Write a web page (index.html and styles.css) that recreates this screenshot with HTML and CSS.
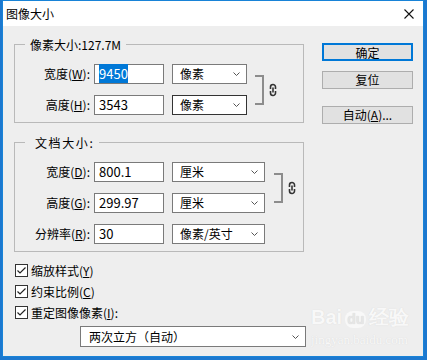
FILE: index.html
```html
<!DOCTYPE html>
<html>
<head>
    <title>图像大小</title>
    <link rel="stylesheet" href="styles.css">
</head>
<body>
    <div class="window">
        <div class="titlebar">
            <span class="title">图像大小</span>
            <svg class="close" width="10" height="10" viewBox="0 0 10 10">
                <path d="M0.5 0.5 L9.5 9.5 M9.5 0.5 L0.5 9.5" stroke="#111" stroke-width="1.1" fill="none"/>
            </svg>
        </div>

        <div class="content">
            <div class="main">
                <!-- Pixel dimensions -->
                <fieldset class="group">
                    <legend>像素大小:127.7M</legend>
                    <div class="rows">
                        <label class="lbl">宽度(<u>W</u>):</label>
                        <div class="field"><span class="sel">9450</span></div>
                        <div class="select">像素
                            <svg width="7" height="4" viewBox="0 0 7 4"><path d="M0.5 0.5 L3.5 3.5 L6.5 0.5" stroke="#555" fill="none"/></svg>
                        </div>
                        <div class="bracket"></div>
                        <svg class="link" width="8" height="14" viewBox="0 0 8 14">
                            <path d="M1.5 6 V4 A2.5 2.5 0 0 1 6.5 4 V6 M1.5 8 V10 A2.5 2.5 0 0 0 6.5 10 V8 M4 4.5 V9.5" stroke="#333" stroke-width="1.6" fill="none"/>
                        </svg>

                        <label class="lbl">高度(<u>H</u>):</label>
                        <div class="field">3543</div>
                        <div class="select dark">像素
                            <svg width="7" height="4" viewBox="0 0 7 4"><path d="M0.5 0.5 L3.5 3.5 L6.5 0.5" stroke="#555" fill="none"/></svg>
                        </div>
                    </div>
                </fieldset>

                <!-- Document size -->
                <fieldset class="group doc">
                    <legend>文档大小:</legend>
                    <div class="rows">
                        <label class="lbl">宽度(<u>D</u>):</label>
                        <div class="field">800.1</div>
                        <div class="select">厘米
                            <svg width="7" height="4" viewBox="0 0 7 4"><path d="M0.5 0.5 L3.5 3.5 L6.5 0.5" stroke="#555" fill="none"/></svg>
                        </div>
                        <div class="bracket"></div>
                        <svg class="link" width="8" height="14" viewBox="0 0 8 14">
                            <path d="M1.5 6 V4 A2.5 2.5 0 0 1 6.5 4 V6 M1.5 8 V10 A2.5 2.5 0 0 0 6.5 10 V8 M4 4.5 V9.5" stroke="#333" stroke-width="1.6" fill="none"/>
                        </svg>

                        <label class="lbl">高度(<u>G</u>):</label>
                        <div class="field">299.97</div>
                        <div class="select">厘米
                            <svg width="7" height="4" viewBox="0 0 7 4"><path d="M0.5 0.5 L3.5 3.5 L6.5 0.5" stroke="#555" fill="none"/></svg>
                        </div>

                        <label class="lbl">分辨率(<u>R</u>):</label>
                        <div class="field">30</div>
                        <div class="select">像素/英寸
                            <svg width="7" height="4" viewBox="0 0 7 4"><path d="M0.5 0.5 L3.5 3.5 L6.5 0.5" stroke="#555" fill="none"/></svg>
                        </div>
                    </div>
                </fieldset>

                <!-- Options -->
                <div class="checks">
                    <div class="check">
                        <svg width="13" height="13" viewBox="0 0 13 13"><rect x="0.5" y="0.5" width="12" height="12" fill="#fff" stroke="#333"/><path d="M2.5 6.5 L5 9 L10.5 3.5" stroke="#222" stroke-width="1.2" fill="none"/></svg>
                        <span>缩放样式(<u>Y</u>)</span>
                    </div>
                    <div class="check">
                        <svg width="13" height="13" viewBox="0 0 13 13"><rect x="0.5" y="0.5" width="12" height="12" fill="#fff" stroke="#333"/><path d="M2.5 6.5 L5 9 L10.5 3.5" stroke="#222" stroke-width="1.2" fill="none"/></svg>
                        <span>约束比例(<u>C</u>)</span>
                    </div>
                    <div class="check">
                        <svg width="13" height="13" viewBox="0 0 13 13"><rect x="0.5" y="0.5" width="12" height="12" fill="#fff" stroke="#333"/><path d="M2.5 6.5 L5 9 L10.5 3.5" stroke="#222" stroke-width="1.2" fill="none"/></svg>
                        <span>重定图像像素(<u>I</u>):</span>
                    </div>
                </div>
                <div class="select resample">两次立方（自动）
                    <svg width="7" height="4" viewBox="0 0 7 4"><path d="M0.5 0.5 L3.5 3.5 L6.5 0.5" stroke="#555" fill="none"/></svg>
                </div>
            </div>

            <div class="buttons">
                <button class="btn default">确定</button>
                <button class="btn">复位</button>
                <button class="btn auto">自动(<u>A</u>)...</button>
            </div>
        </div>

        <div class="watermark">
            <div class="wm-logo">Bai<span class="paw">du</span>经验</div>
            <div class="wm-url">jingyan.baidu.com</div>
        </div>
    </div>
</body>
</html>
```

FILE: styles.css
```css
body { margin: 0; background: #1c78cf; font-family: "Noto Sans CJK SC", "Noto Sans", sans-serif; font-size: 12px; color: #000; }
.window { position: relative; box-sizing: border-box; width: 422px; height: 357px; margin-left: 2px; border: 1px solid #1883d7; background: #eeeeee; overflow: hidden; }
.titlebar { height: 25px; background: #fff; display: flex; align-items: center; justify-content: space-between; padding: 0 9px 0 3px; }
.title { font-size: 12px; line-height: 16px; }

.content { display: flex; gap: 18px; padding: 10px 10px 0 11px; }
.main { width: 290px; }

.group { margin: 0; padding: 11px 0 7px; border: 1px solid #b9b9b9; min-width: 0; }
.group legend { margin-left: 10px; padding: 0 5px; line-height: 17px; font-size: 12px; }
.group.doc { margin-top: 11px; }
.group.doc legend { padding-left: 10px; letter-spacing: 1.6px; }

.rows { display: grid; grid-template-columns: 75px auto auto auto auto; justify-content: start; row-gap: 11px; align-items: center; }
.lbl { text-align: right; line-height: 20px; white-space: nowrap; }
.field { box-sizing: border-box; width: 70px; height: 20px; margin-left: 4px; padding: 0 4px; border: 1px solid #7a7a7a; background: #fff; font-size: 13px; line-height: 18px; }
.sel { background: #0078d7; color: #fff; }
.select { box-sizing: border-box; width: 75px; height: 20px; margin-left: 8px; padding: 0 6px 0 7px; border: 1px solid #7a7a7a; background: #fff; display: flex; align-items: center; justify-content: space-between; line-height: 18px; font-size: 12px; }
.select.dark { border-color: #333; }
.doc .select { width: 93px; }
.bracket { grid-column: 4; grid-row: 1 / 3; box-sizing: border-box; width: 9px; height: 30px; margin-left: 8px; border: 2px solid #8c8c8c; border-left: 0; }
.link { grid-column: 5; grid-row: 1 / 3; margin-left: 5px; }
.doc .bracket { margin-left: 9px; }

.checks { margin-top: 8px; }
.check { height: 21px; display: flex; align-items: center; gap: 3px; padding-left: 1px; }
.check span { line-height: 16px; }
.select.resample { width: 226px; height: 21px; margin: 3px 0 0 66px; padding-left: 8px; }

.buttons { display: flex; flex-direction: column; padding-top: 7px; }
.btn { box-sizing: border-box; width: 91px; height: 18px; padding: 0; border: 1px solid #adadad; background: #e1e1e1; font-family: inherit; font-size: 12px; line-height: 16px; color: #000; }
.btn + .btn { margin-top: 10px; }
.btn.default { border: 2px solid #0078d7; }
.btn.auto { margin-top: 17px; }

.watermark { position: absolute; left: 308px; top: 302px; color: #f8f8f8; text-shadow: 0 0 1px #d4d4d4; }
.wm-logo { font-family: "Liberation Sans", sans-serif; font-size: 20px; font-weight: bold; line-height: 28px; }
.paw { display: inline-block; margin: 0 3px; padding: 0 2px; border-radius: 8px; background: #f8f8f8; color: #e6e6e6; font-size: 14px; line-height: 17px; }
.wm-url { font-family: "Liberation Serif", serif; font-size: 13px; line-height: 14px; margin-top: 2px; }
```
